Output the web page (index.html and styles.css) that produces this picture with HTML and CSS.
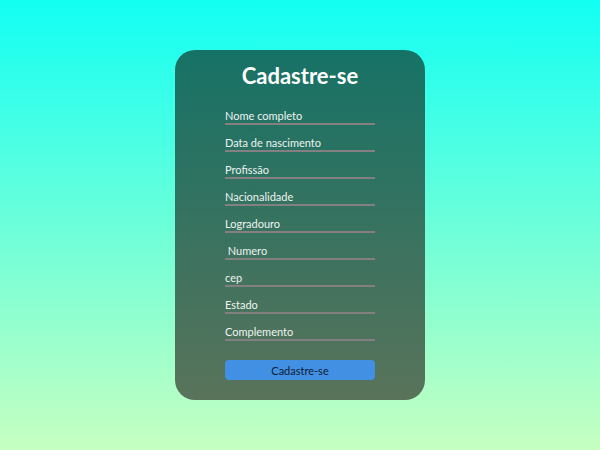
FILE: index.html
```html
<!DOCTYPE html>
<html lang="pt">
<head>
<meta charset="utf-8">
<title>Cadastre-se</title>
<link rel="stylesheet" href="styles.css">
</head>
<body>
<main class="page">
  <form class="card">
    <h1 class="title">Cadastre-se</h1>
    <div class="fields">
      <input class="field" type="text" placeholder="Nome completo">
      <input class="field" type="text" placeholder="Data de nascimento">
      <input class="field" type="text" placeholder="Profissão">
      <input class="field" type="text" placeholder="Nacionalidade">
      <input class="field" type="text" placeholder="Logradouro">
      <input class="field" type="text" placeholder=" Numero">
      <input class="field" type="text" placeholder="cep">
      <input class="field" type="text" placeholder="Estado">
      <input class="field" type="text" placeholder="Complemento">
    </div>
    <button class="submit" type="button">Cadastre-se</button>
  </form>
</main>
</body>
</html>
```
FILE: styles.css
```css
html, body {
  margin: 0;
  padding: 0;
}
body {
  width: 600px;
  height: 450px;
  background: linear-gradient(180deg, #12fff3 0%, #c6ffc0 100%);
  font-family: Lato, "Noto Sans", sans-serif;
  overflow: hidden;
}
.page {
  height: 450px;
  display: flex;
  align-items: center;
  justify-content: center;
}
.card {
  box-sizing: border-box;
  width: 250px;
  height: 350px;
  border-radius: 20px;
  background: linear-gradient(180deg, #167266 0%, #59735a 100%);
  display: flex;
  flex-direction: column;
  align-items: center;
  padding-top: 13px;
}
.title {
  margin: 0;
  color: #ffffff;
  font-size: 22px;
  font-weight: 700;
  line-height: 26px;
  height: 35px;
}
.fields {
  display: flex;
  flex-direction: column;
}
.field {
  box-sizing: border-box;
  width: 150px;
  height: 27px;
  margin: 0;
  padding: 9px 0 0 0;
  border: none;
  border-bottom: 2px solid #847f80;
  background: transparent;
  color: #ffffff;
  font-family: Lato, "Noto Sans", sans-serif;
  font-size: 11px;
  outline: none;
}
.field::placeholder {
  color: #eef3f0;
  opacity: 1;
}
.submit {
  margin-top: 19px;
  width: 150px;
  height: 20px;
  border: none;
  border-radius: 4px;
  background: #4290e3;
  color: #0e1b33;
  font-family: Lato, "Noto Sans", sans-serif;
  font-size: 11px;
  padding: 0;
}
```
